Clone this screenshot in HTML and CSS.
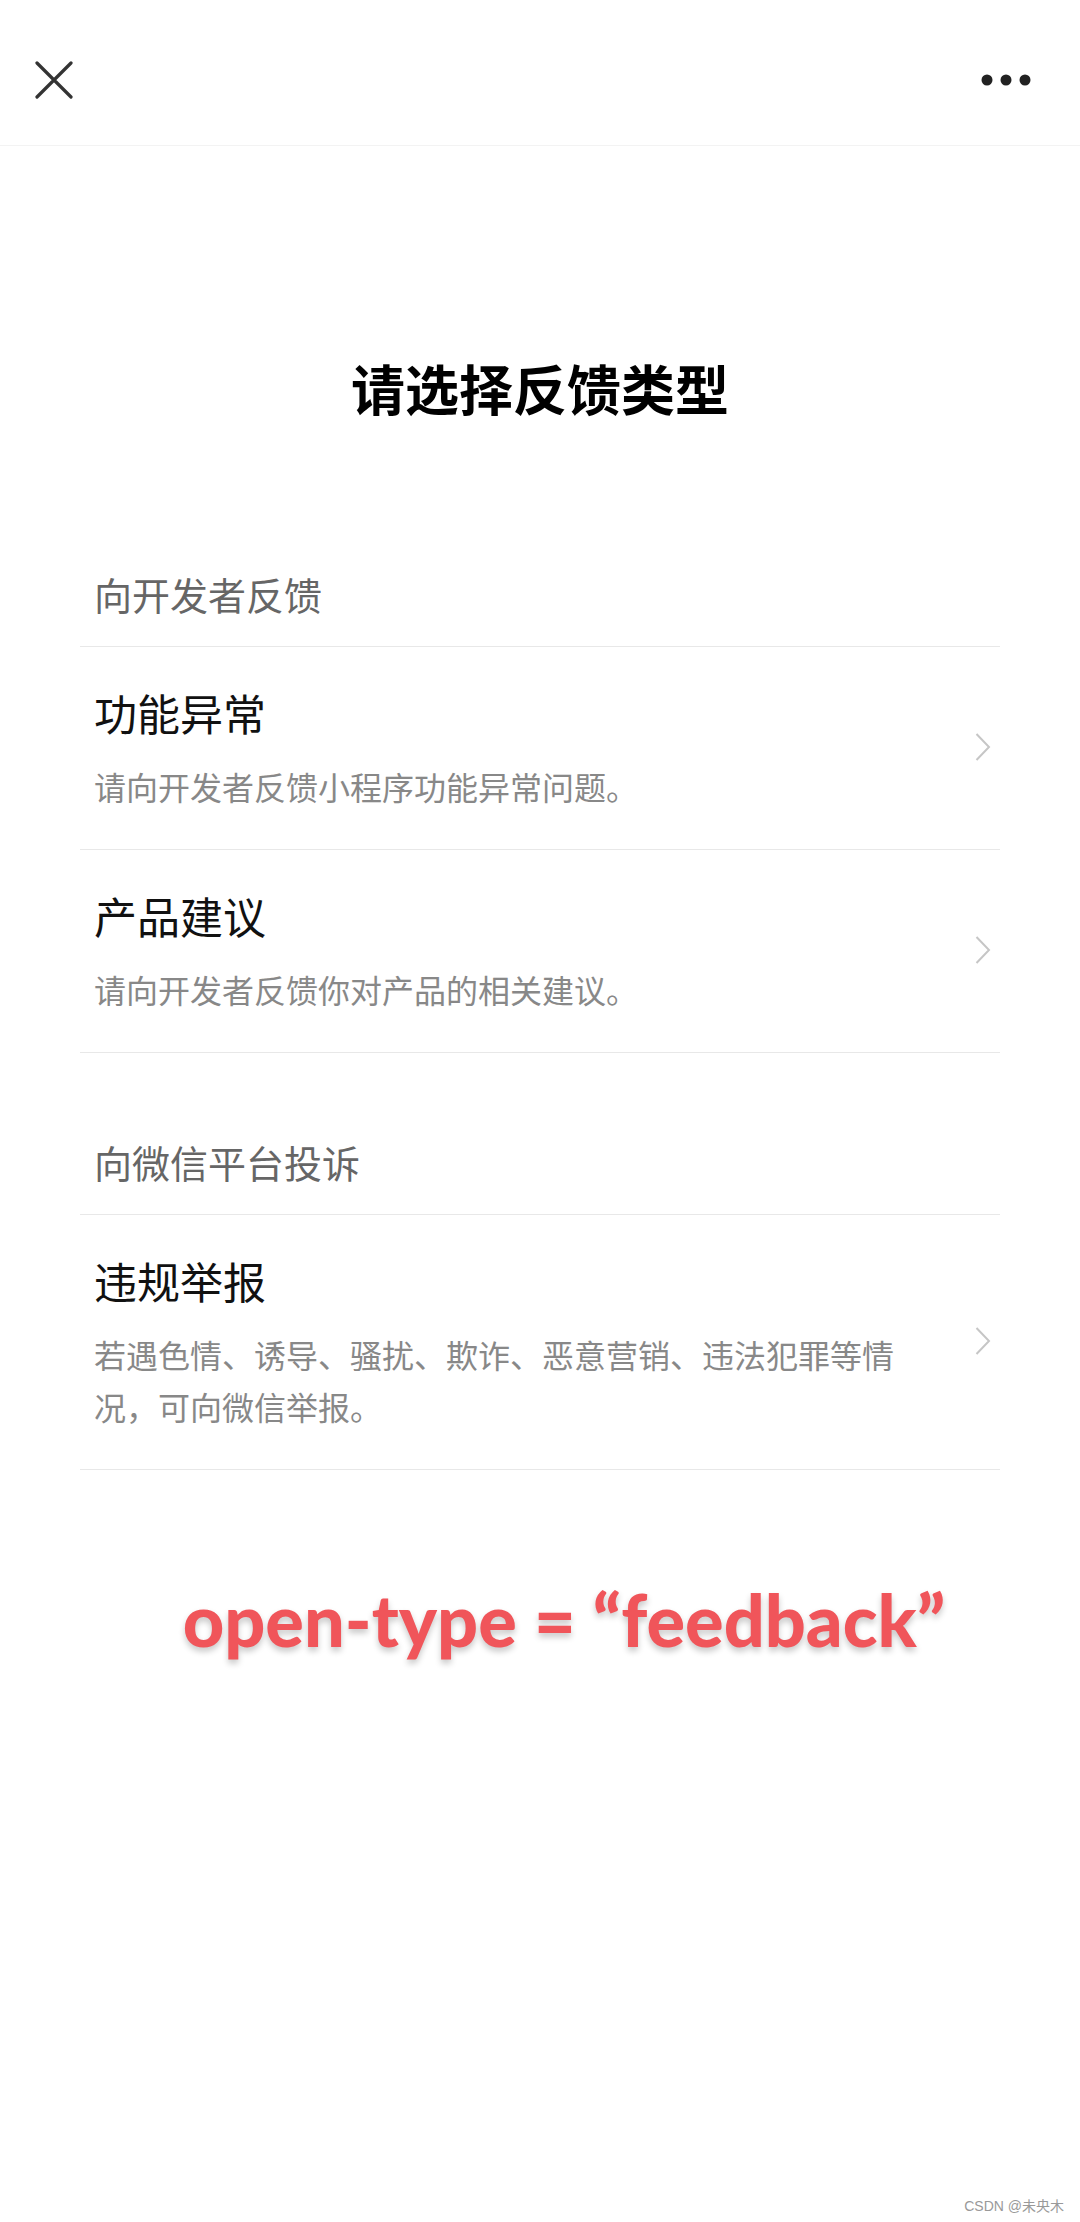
FILE: index.html
```html
<!DOCTYPE html>
<html lang="zh-CN">
<head>
  <meta charset="UTF-8" />
  <meta name="viewport" content="width=device-width, initial-scale=1" />
  <title>请选择反馈类型</title>
  <link rel="stylesheet" href="styles.css">
</head>
<body>
  <div class="topbar">
    <svg class="close-icon" width="38" height="38" viewBox="0 0 38 38">
      <path d="M2 2 L36 36 M36 2 L2 36" stroke="#333" stroke-width="3.2" stroke-linecap="round" fill="none" />
    </svg>
    <svg class="more-icon" width="50" height="12" viewBox="0 0 50 12">
      <circle cx="6" cy="6" r="5.5" fill="#222" />
      <circle cx="25" cy="6" r="5.5" fill="#222" />
      <circle cx="44" cy="6" r="5.5" fill="#222" />
    </svg>
  </div>

  <h1 class="page-title">请选择反馈类型</h1>

  <div class="list">
    <div class="group-head">向开发者反馈</div>
    <div class="item">
      <div class="item-text">
        <p class="item-title">功能异常</p>
        <p class="item-desc">请向开发者反馈小程序功能异常问题。</p>
      </div>
      <svg class="chevron" width="16" height="28" viewBox="0 0 16 28">
        <path d="M1.5 1 L14 14 L1.5 27" stroke="#c6c6c6" stroke-width="2" fill="none" />
      </svg>
    </div>
    <div class="item">
      <div class="item-text">
        <p class="item-title">产品建议</p>
        <p class="item-desc">请向开发者反馈你对产品的相关建议。</p>
      </div>
      <svg class="chevron" width="16" height="28" viewBox="0 0 16 28">
        <path d="M1.5 1 L14 14 L1.5 27" stroke="#c6c6c6" stroke-width="2" fill="none" />
      </svg>
    </div>

    <div class="group-head group-gap">向微信平台投诉</div>
    <div class="item">
      <div class="item-text">
        <p class="item-title">违规举报</p>
        <p class="item-desc">若遇色情、诱导、骚扰、欺诈、恶意营销、违法犯罪等情况，可向微信举报。</p>
      </div>
      <svg class="chevron" width="16" height="28" viewBox="0 0 16 28">
        <path d="M1.5 1 L14 14 L1.5 27" stroke="#c6c6c6" stroke-width="2" fill="none" />
      </svg>
    </div>
  </div>

  <p class="note">open-type = “feedback”</p>

  <span class="watermark">CSDN @未央木</span>
</body>
</html>
```

FILE: styles.css
```css
body {
  margin: 0;
  min-height: 2222px;
  position: relative;
  background-color: #ffffff;
  font-family: "Noto Sans CJK SC", "Noto Sans", sans-serif;
  color: #111;
}
p {
  margin: 0;
}
.topbar {
  height: 131px;
  padding-top: 14px;
  display: flex;
  align-items: center;
  justify-content: space-between;
  border-bottom: 1px solid #f3f3f3;
}
.close-icon {
  margin-left: 35px;
}
.more-icon {
  margin-right: 49px;
}
.page-title {
  margin: 204px 0 115px;
  font-size: 54px;
  line-height: 76px;
  font-weight: bold;
  text-align: center;
  color: #000;
}
.list {
  margin: 0 80px;
}
.group-head {
  height: 106px;
  box-sizing: border-box;
  padding-left: 14px;
  display: flex;
  align-items: center;
  font-size: 38px;
  color: #666;
  border-bottom: 1px solid #e8e8e8;
}
.group-gap {
  margin-top: 56px;
}
.item {
  display: flex;
  align-items: center;
  padding: 35px 9px 37px 14px;
  border-bottom: 1px solid #e8e8e8;
}
.item-text {
  flex: 1;
}
.item-title {
  font-size: 43px;
  line-height: 60px;
  color: #111;
}
.item-desc {
  margin-top: 18px;
  font-size: 32px;
  line-height: 52px;
  color: #888;
}
.chevron {
  margin-left: 52px;
  flex-shrink: 0;
}
.note {
  margin-top: 109px;
  padding-left: 48px;
  text-align: center;
  font-family: Lato, "Open Sans", sans-serif;
  font-weight: 900;
  font-size: 72px;
  line-height: 80px;
  color: #f0555a;
  text-shadow: 0 4px 6px rgba(0, 0, 0, 0.22);
}
.watermark {
  position: absolute;
  right: 16px;
  bottom: 7px;
  font-family: "Liberation Sans", "Noto Sans CJK SC", sans-serif;
  font-size: 14px;
  color: #999;
}
```
